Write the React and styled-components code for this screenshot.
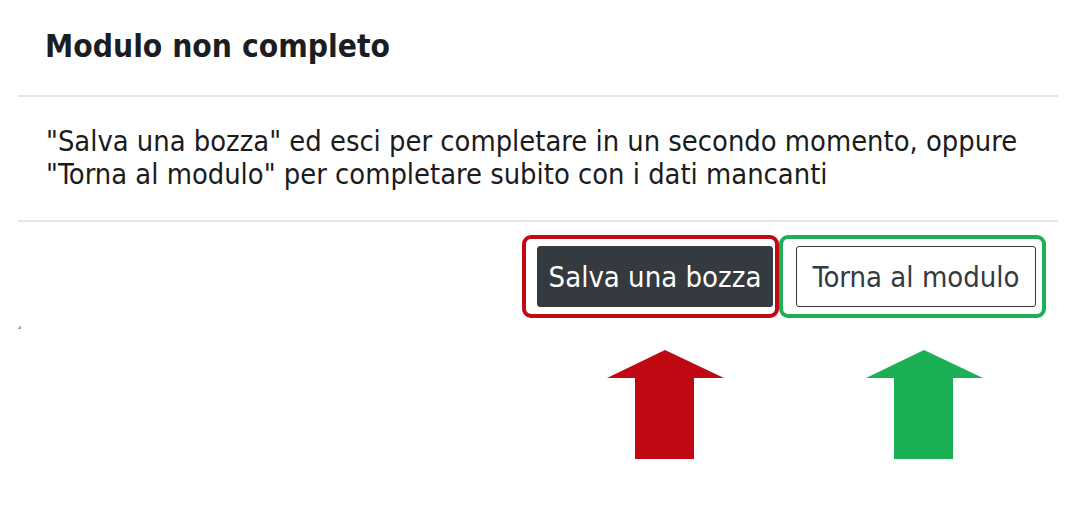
import styled, { createGlobalStyle } from "styled-components";

const Global = createGlobalStyle`
  html, body {
    margin: 0;
    padding: 0;
    background: #ffffff;
  }
  body {
    font-family: "Liberation Sans Narrow", "DejaVu Sans Condensed", "Liberation Sans", sans-serif;
    color: #1b1b1b;
  }
`;

const Dialog = styled.div`
  width: 1040px;
  margin-left: 18px;
  height: 510px;
  position: relative;
`;

const Header = styled.div`
  padding: 22px 27px 25px;
  border-bottom: 2px solid #e6e6e6;
`;

const Title = styled.h2`
  margin: 0;
  font-size: 31.5px;
  line-height: 48px;
  font-weight: 700;
  color: #1b1e21;
`;

const Body = styled.div`
  padding: 28px 27px 29px 28px;
  border-bottom: 2px solid #e6e6e6;
`;

const Text = styled.p`
  margin: 0;
  font-size: 28.8px;
  line-height: 33px;
  color: #1b1b1b;
`;

const Footer = styled.div`
  display: flex;
  justify-content: flex-end;
  padding: 13px 12px 0 0;
`;

const Group = styled.div`
  display: flex;
  flex-direction: column;
`;

const Outline = styled.div`
  border: 4px solid ${(p) => p.color};
  border-radius: 9px;
  padding: ${(p) => p.pad};
  height: 83px;
  box-sizing: border-box;
  display: flex;
  align-items: center;
`;

const Button = styled.button`
  font-family: inherit;
  font-size: 29px;
  height: 61px;
  width: ${(p) => p.w}px;
  border-radius: 3px;
  padding: 0;
  cursor: pointer;
  color: ${(p) => (p.dark ? "#ffffff" : "#343a40")};
  background: ${(p) => (p.dark ? "#343a40" : "#ffffff")};
  border: 1.5px solid #343a40;
`;

const ArrowSlot = styled.div`
  padding-left: ${(p) => p.left}px;
  margin-top: 32px;
  line-height: 0;
`;

const Speck = styled.div`
  position: absolute;
  left: 0;
  top: 325px;
  width: 3px;
  height: 4px;
  background: linear-gradient(135deg, transparent 40%, #9a9a9a 60%);
`;

const Arrow = ({ color }) => (
  <svg width="117" height="109" viewBox="0 0 117 109">
    <polygon points="58,0 117,28 87,28 87,109 28,109 28,28 0,28" fill={color} />
  </svg>
);

export default function App() {
  return (
    <>
      <Global />
      <Dialog>
        <Header>
          <Title>Modulo non completo</Title>
        </Header>
        <Body>
          <Text>
            "Salva una bozza" ed esci per completare in un secondo momento, oppure
            <br />
            "Torna al modulo" per completare subito con i dati mancanti
          </Text>
        </Body>
        <Footer>
          <Group>
            <Outline color="#c20a15" pad="0 2px 0 11px">
              <Button dark w={236}>Salva una bozza</Button>
            </Outline>
            <ArrowSlot left={85}>
              <Arrow color="#c00813" />
            </ArrowSlot>
          </Group>
          <Group>
            <Outline color="#1db055" pad="0 6px 0 13px">
              <Button w={240}>Torna al modulo</Button>
            </Outline>
            <ArrowSlot left={87}>
              <Arrow color="#1cb055" />
            </ArrowSlot>
          </Group>
        </Footer>
        <Speck />
      </Dialog>
    </>
  );
}
